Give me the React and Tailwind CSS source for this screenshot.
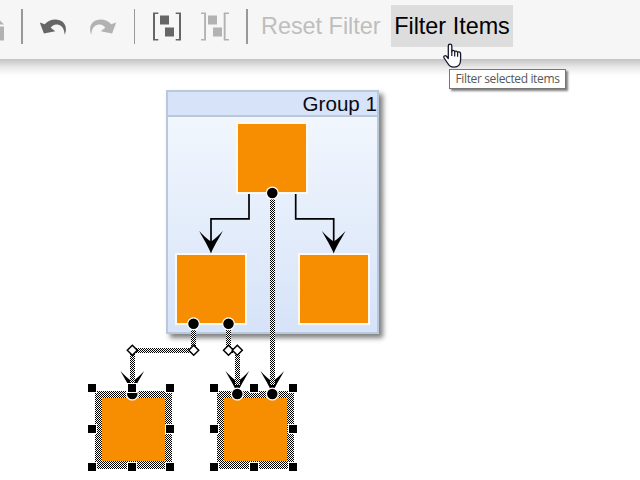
import React from "react";

const nodes = [
  "left-[236px] top-[122px]",
  "left-[175px] top-[253px]",
  "left-[298px] top-[253px]",
];

function Separator({ wide }) {
  return <span className={(wide ? "w-[2px]" : "w-px") + " h-[35px] shrink-0 bg-[#999]"} />;
}

function HomeIcon() {
  return (
    <svg className="h-[30px] w-[5px]" viewBox="0 0 5 30" fill="#b2b2b2">
      <path d="M0 8.500 4 12.500H0zM0 14.500h4v14H0z" />
    </svg>
  );
}

function UndoIcon({ flip }) {
  return (
    <svg className={"h-[16px] w-[28px] " + (flip ? "-scale-x-100 text-[#b2b2b2]" : "text-[#666]")} viewBox="0 0 28 16" fill="currentColor">
      <path d="M.8 3.500 5.700 5.200C8.500 2 12 .4 16.300.4 22.500.4 26.700 4.300 26.900 9.500 27 11.800 26.600 13.900 25.600 15.700 25.500 11 23.500 6.300 18.500 5.600 15.500 5.200 13 6.500 11.700 8.800L16.300 12.300 4.900 14.500z" />
    </svg>
  );
}

function GroupIcon() {
  return (
    <svg className="h-[30px] w-[30px]" viewBox="0 0 30 30" fill="#666">
      <path d="M1 .5h5.300V2.100H3v24.800h3.300v1.600H1zM29 .5h-5.300V2.100H27v24.800h-3.300v1.600H29z" />
      <path d="M8 3.500h9v9H8zM13 15.500h9v9h-9z" />
    </svg>
  );
}

function UngroupIcon() {
  return (
    <svg className="h-[30px] w-[30px]" viewBox="0 0 30 30" fill="#b2b2b2">
      <path d="M1 .5h5v28H1V27h3.100V2H1zM29 .5h-5.300v28H29V27h-3.400V2H29z" />
      <path d="M8 3.500h9v9H8zM13 15.500h9v9h-9z" />
    </svg>
  );
}

function Toolbar() {
  return (
    <header className="relative z-10 flex h-[59px] items-start bg-[#f6f6f6]">
      <div className="flex h-[53px] items-center">
        <HomeIcon />
        <div className="ml-[16px] flex"><Separator wide /></div>
        <button className="ml-[16px] flex"><UndoIcon /></button>
        <button className="ml-[22px] flex"><UndoIcon flip /></button>
        <div className="ml-[17px] flex"><Separator /></div>
        <button className="ml-[17px] flex"><GroupIcon /></button>
        <button className="ml-[18px] flex"><UngroupIcon /></button>
        <div className="ml-[16px] flex"><Separator wide /></div>
        <button className="ml-[13px] whitespace-nowrap text-[23.4px] text-[#bebebe]">Reset Filter</button>
      </div>
      <button className="absolute left-[391px] top-[5px] flex h-[42px] w-[122px] items-center justify-center whitespace-nowrap bg-[#ddd] pt-[2px] text-[23.4px] text-black">Filter Items</button>
      <div className="absolute inset-x-0 top-full h-[17px] bg-linear-to-b from-[#c3c3c3] via-[#eaeaea] to-transparent" />
    </header>
  );
}

function Arrow({ x, y }) {
  return <path d={`M${x} ${y} C${x - 3.500} ${y - 9} ${x - 7.500} ${y - 14} ${x - 11.800} ${y - 22.500} Q${x - 5} ${y - 15} ${x} ${y - 12} Q${x + 5} ${y - 15} ${x + 11.800} ${y - 22.500} C${x + 7.500} ${y - 14} ${x + 3.500} ${y - 9} ${x} ${y}z`} />;
}

function Port({ x, y }) {
  return <circle cx={x} cy={y} r="5.9" fill="#000" stroke="#fff" strokeWidth="1.3" />;
}

function Bend({ x }) {
  return <path d={`M${x} 345.300l5 5-5 5-5-5z`} fill="#fff" stroke="#000" strokeWidth="1.5" />;
}

function Selection({ cols }) {
  const rows = [384, 425, 463];
  return (
    <g>
      {rows.map((y, r) =>
        cols.map((x, c) =>
          r === 1 && c === 1 ? null : (
            <g key={`${r}-${c}`} shapeRendering="crispEdges">
              <rect x={x - 1} y={y - 1} width="10" height="10" fill="#fff" />
              <rect x={x} y={y} width="8" height="8" fill="#000" />
            </g>
          )
        )
      )}
    </g>
  );
}

function Connections() {
  return (
    <svg className="absolute inset-0" width="640" height="480" viewBox="0 0 640 480">
      <defs>
        <pattern id="hatch" width="2" height="2" patternUnits="userSpaceOnUse">
          <rect width="2" height="2" fill="#fff" />
          <path d="M0 0h1v1H0zM1 1h1v1H1z" fill="#000" />
        </pattern>
      </defs>
      <g fill="none" stroke="#000" strokeWidth="1.7">
        <path d="M249 194v24.900h-38V245" />
        <path d="M295.700 194v24.900h38V245" />
      </g>
      <Arrow x={211} y={253.500} />
      <Arrow x={333.700} y={253.500} />
      <Arrow x={132.300} y={393.500} />
      <Arrow x={237.300} y={393.500} />
      <Arrow x={272.300} y={393.500} />
      <g fill="url(#hatch)" shapeRendering="crispEdges">
        <path d="M270 193h5v192h-5z" />
        <path d="M191 324h5v29h-61v33h-5v-38h61z" />
        <path d="M226 324h5v24h9v37h-5v-32h-9z" />
        <path fillRule="evenodd" d="M95 391h77v78H95zM102 398v63h63v-63z" />
        <path fillRule="evenodd" d="M217 391h77v78h-77zM224 398v63h63v-63z" />
      </g>
      <Port x={272.3} y={193} />
      <Port x={193.500} y={323.800} />
      <Port x={228.500} y={323.800} />
      <Port x={132.300} y={394} />
      <Selection cols={[88, 128, 166]} />
      <Selection cols={[210, 250, 289]} />
      <Port x={237.300} y={394} />
      <Port x={272.300} y={394} />
      <Bend x={132.300} />
      <Bend x={193.700} />
      <Bend x={228.500} />
      <Bend x={237.300} />
    </svg>
  );
}

function Pointer() {
  return (
    <svg className="absolute left-[442px] top-[43px] z-20" width="20" height="26" viewBox="0 0 20 26">
      <path d="M6.300 15.500V3c0-2.400 3.500-2.400 3.500 0v5.500c0-1.500 2.900-1.500 2.900.5 0-1.500 2.900-1.200 2.900.7 0-1.300 3-1.200 3 1v5.800c0 4.500-2.200 7.700-6.600 7.700-3.500 0-5-1.500-6.500-4.200l-3.400-5c-1.200-1.800 1-3.200 2.600-1.500z" fill="#fff" stroke="#16162a" strokeWidth="1.3" strokeLinejoin="round" />
      <path d="M9.800 8v5M12.700 9v4.500M15.600 9.700v4" stroke="#16162a" strokeWidth="1.2" />
    </svg>
  );
}

export default function App() {
  return (
    <div className="relative h-[480px] w-[640px] overflow-hidden bg-white font-['Liberation_Sans',Arial,sans-serif]">
      <Toolbar />
      <main className="absolute inset-0">
        <section className="absolute left-[166px] top-[90px] h-[244px] w-[213px] border-2 border-[#bac8dc] bg-linear-to-b from-[#f5f9fe] to-[#d6e3f8] shadow-[4px_4px_5px_rgba(0,0,0,0.5)]">
          <h1 className="h-[25px] border-b-2 border-[#bac8dc] bg-[#d6e3f8] text-right text-[20.6px] leading-[24px] text-[#0a0a14]">Group 1</h1>
        </section>
        {nodes.map((place) => (
          <div key={place} className={"absolute size-[72px] border-2 border-[#fff8ee] bg-[#f78d00] " + place} />
        ))}
        <div className="absolute left-[102px] top-[398px] size-[63px] bg-[#f78d00]" />
        <div className="absolute left-[224px] top-[398px] size-[63px] bg-[#f78d00]" />
        <Connections />
      </main>
      <div className="absolute left-[449px] top-[69px] z-20 flex h-[20px] w-[117px] items-center justify-center whitespace-nowrap border border-[#767676] bg-white font-['Open_Sans',sans-serif] text-[12px] tracking-[-0.36px] text-[#575757] shadow-[2px_2px_2px_rgba(0,0,0,0.5)]">Filter selected items</div>
      <Pointer />
    </div>
  );
}
